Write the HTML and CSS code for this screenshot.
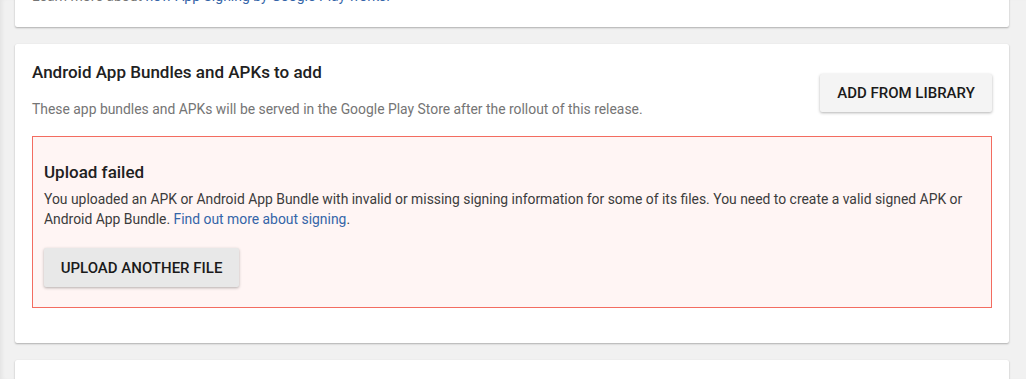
FILE: index.html
```html
<!DOCTYPE html>
<html lang="en">
<head>
<meta charset="utf-8">
<title>Android App Bundles</title>
<link rel="stylesheet" href="styles.css">
</head>
<body>
<main class="page">
  <section class="card card-top">
    <p class="note">Learn more about <a class="link" href="#">how App Signing by Google Play works.</a></p>
  </section>

  <section class="card card-main">
    <div class="header">
      <div class="header-text">
        <h2 class="title">Android App Bundles and APKs to add</h2>
        <p class="desc">These app bundles and APKs will be served in the Google Play Store after the rollout of this release.</p>
      </div>
      <button class="btn btn-raised">ADD FROM LIBRARY</button>
    </div>

    <div class="error-box">
      <h3 class="error-title">Upload failed</h3>
      <p class="error-text">You uploaded an APK or Android App Bundle with invalid or missing signing information for some of its files. You need to create a valid signed APK or Android App Bundle. <a class="link" href="#">Find out more about signing</a>.</p>
      <button class="btn btn-grey">UPLOAD ANOTHER FILE</button>
    </div>
  </section>

  <section class="card card-bottom"></section>
</main>
</body>
</html>
```

FILE: styles.css
```css
* { box-sizing: border-box; }

html, body {
  margin: 0;
  padding: 0;
  height: 100%;
  overflow: hidden;
}

body {
  background: #f1f1f1;
  font-family: Roboto, "Liberation Sans", Arial, sans-serif;
  color: #212121;
  box-shadow: inset 4px 0 4px -2px rgba(0, 0, 0, 0.06);
}

.page {
  display: flex;
  flex-direction: column;
  gap: 17px;
  padding: 0 17px 0 15px;
  margin-top: -20px;
}

.card {
  background: #fff;
  border-radius: 2px;
  box-shadow: 0 1px 2px rgba(0, 0, 0, 0.28), 0 0 1px rgba(0, 0, 0, 0.06);
  padding: 0 17px;
}

.card-top {
  padding-top: 6px;
  padding-bottom: 21px;
}

.note {
  margin: 0;
  font-size: 14px;
  line-height: 20px;
  color: #757575;
}

.link {
  color: #3565a8;
  text-decoration: none;
}

.card-main {
  padding-top: 16px;
  padding-bottom: 35px;
}

.header {
  display: flex;
  align-items: flex-start;
  justify-content: space-between;
}

.title {
  margin: 0;
  font-size: 17px;
  line-height: 24px;
  font-weight: 500;
  color: #212121;
}

.desc {
  margin: 15px 0 0;
  font-size: 13.9px;
  line-height: 20px;
  color: #757575;
}

.btn {
  font-family: Roboto, "Liberation Sans", Arial, sans-serif;
  font-size: 15px;
  font-weight: 500;
  color: #1a1a1a;
  border: none;
  border-radius: 2px;
  height: 38px;
  padding: 0;
  box-shadow: 0 1px 3px rgba(0, 0, 0, 0.3);
  letter-spacing: 0;
  cursor: pointer;
}

.btn-raised {
  background: #f4f4f4;
  margin-top: 14px;
  width: 172px;
}

.btn-grey {
  background: #e8e8e8;
  width: 195px;
  height: 39px;
}

.error-box {
  margin-top: 17px;
  border: 1px solid #f36c60;
  background: #fff5f4;
  padding: 23px 11px 20px;
}

.error-title {
  margin: 0;
  font-size: 17px;
  line-height: 24px;
  font-weight: 500;
  color: #212121;
}

.error-text {
  margin: 5px 0 19px;
  font-size: 13.9px;
  line-height: 20px;
  color: #3c3c3c;
}

.card-bottom {
  height: 60px;
}
```
